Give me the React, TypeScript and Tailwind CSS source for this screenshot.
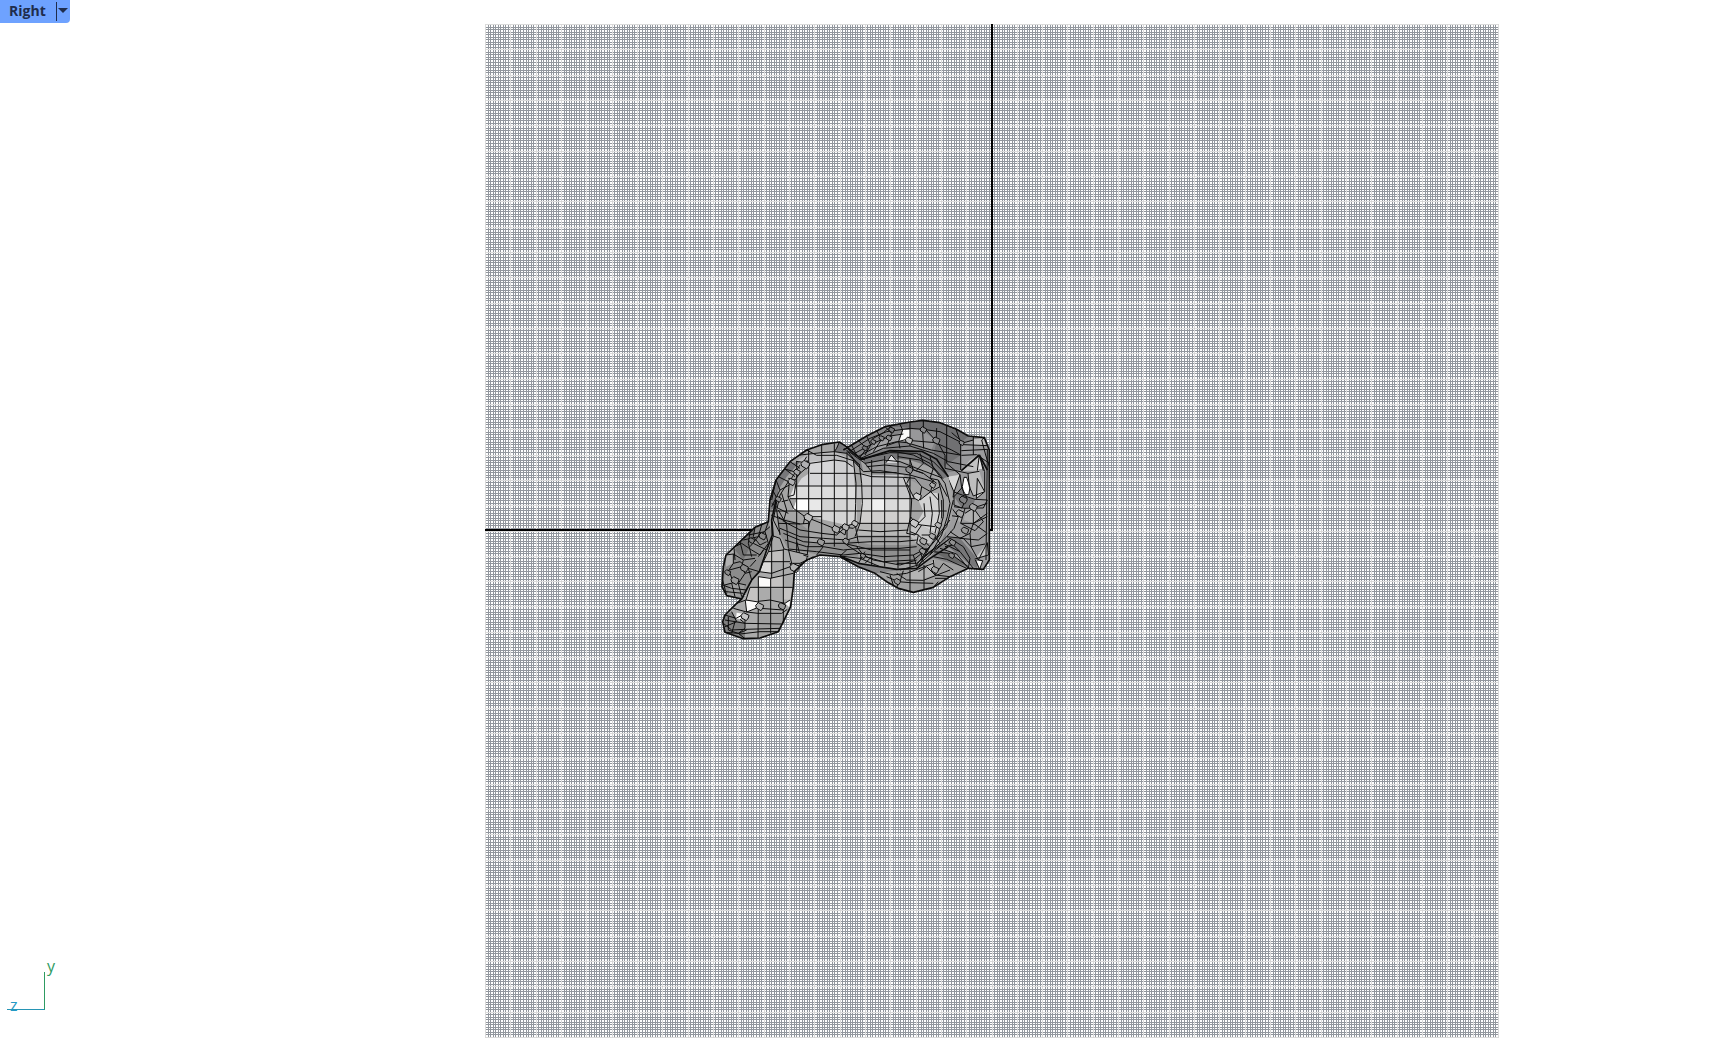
const GRID_SIZE = 1014;
const MINOR_STEPS = 400;
const SPACING = 1013 / MINOR_STEPS;

function gridPath(every: number) {
  let d = "";
  for (let i = 0; i <= MINOR_STEPS; i += every) {
    const p = Math.round(i * SPACING);
    d += `M${p} 0h1v${GRID_SIZE}h-1zM0 ${p}h${GRID_SIZE}v1h-${GRID_SIZE}z`;
  }
  return d;
}

const MINOR = gridPath(1);
const MAJOR = gridPath(10);

type Face = [string, string];

// Shaded regions of the mesh, back to front.
const BACK_FACES: Face[] = [
  ["#848486", "M430 150 500 108 555 80 630 66 668 61 720 68 770 88 805 108 853 113 868 150 868 480 850 508 805 505 750 530 700 562 640 577 595 565 560 545 525 520 475 500 420 470 440 300Z"],
  ["#6e6e70", "M555 80 630 66 668 61 720 68 770 88 805 108 790 122 740 100 668 88 600 80Z"],
  ["#707072", "M710 84 755 98 782 128 782 166 730 200 700 162 710 126Z"],
  ["#98989a", "M630 88 668 92 706 120 694 150 630 130Z"],
  ["#a2a2a4", "M520 135 600 100 597 124 510 160Z"],
  ["#fafafa", "M608 90 630 90 630 107 618 122 596 124Z"],
  ["#a0a0a0", "M525 520 620 508 700 475 805 505 750 530 700 562 640 577 595 565 560 545Z"],
  ["#b4b4b4", "M630 515 672 508 672 541 630 541ZM672 500 705 480 705 525 672 535Z"],
  ["#9c9c9e", "M784 128 853 113 868 150 868 480 850 508 805 505 740 455 730 220 784 210Z"],
  ["#c2c2c2", "M820 118 851 115 857 137 820 135ZM784 212 810 180 838 165 838 212Z"],
  ["#d8d8d8", "M742 230 780 224 762 276ZM832 235 854 275 829 296Z"],
  ["#bdbdbd", "M804 220 838 214 855 270 820 288 808 260Z"],
  ["#777779", "M762 290 785 264 800 290 825 298 818 324 786 324ZM740 410 780 415 835 480 830 505 805 490 745 440Z"],
  ["#b0b0b0", "M795 340 820 328 845 350 820 370 792 360ZM762 350 790 345 782 370Z"],
  ["#c8c8c8", "M862 428 865 465 824 477Z"],
  ["#f2f2f2", "M830 482 848 484 839 506Z"],
  ["#ffffff", "M790 234 802 234 811 262 806 284 792 284 787 260Z"],
  ["#e2e2e2", "M835 178 844 180 846 207 832 207Z"],
  ["#686868", "M700 455 750 460 805 500 750 482Z"],
];
const BODY_FACES: Face[] = [
  ["#a5a5a5", "M435 137 485 178 570 152 665 154 710 178 745 230 760 300 755 360 725 420 690 475 650 505 590 508 525 498 475 490 420 468 360 465 320 480 283 515 220 470 205 365 210 300 228 240 270 185 320 150 365 134 418 126Z"],
  ["#777779", "M485 178 570 152 665 154 710 178 745 230 730 235 690 200 630 180 570 175 500 195Z"],
  ["#99999b", "M495 190 570 178 630 190 700 230 690 270 620 235 515 218Z"],
  ["#bdbdbf", "M288 184 330 160 403 155 460 180 465 220 330 220 310 195Z"],
  ["#d6d6d8", "M330 185 403 180 403 258 290 258 305 235 328 220Z"],
  ["#cfcfd1", "M403 180 435 184 460 205 464 258 403 258Z"],
  ["#c7c7c9", "M485 220 515 225 610 225 630 258 485 258Z"],
  ["#dddddd", "M290 258 465 258 465 296 270 296Z"],
  ["#e8e8e8", "M290 298 365 298 365 334 280 330Z"],
  ["#d4d4d4", "M365 296 470 296 470 370 440 375 330 350 325 334 365 334Z"],
  ["#c5c5c7", "M470 258 632 258 638 296 470 296Z"],
  ["#dadada", "M483 296 632 296 632 334 483 334Z"],
  ["#f0f0f0", "M515 296 554 296 554 334 515 334Z"],
  ["#d0cfce", "M480 334 632 334 632 370 480 370Z"],
  ["#b9b9b8", "M475 370 635 370 627 405 475 405Z"],
  ["#fff", "M290 300 326 300 326 334 280 328Z"],
  ["#e6e6e6", "M282 260 290 296 270 290Z"],
  ["#d2d2d2", "M655 300 692 278 715 280 725 340 710 400 650 370 670 335Z"],
  ["#c3c3c3", "M640 370 670 378 705 400 690 430 650 430 625 402Z"],
  ["#8f8f8f", "M235 350 300 370 325 390 325 430 370 430 470 420 475 470 420 468 360 465 265 447 240 405ZM475 425 515 435 630 435 690 430 650 490 590 490 515 470 475 460Z"],
  ["#77777a", "M235 230 270 190 300 185 260 230 235 270 230 320 212 330 215 280ZM418 126 435 137 480 175 490 215 465 190 440 160 403 155Z"],
  ["#e5e5e7", "M558 188 574 165 594 188Z"],
];
const EAR_FACES: Face[] = [
  ["#8c8c8c", "M205 365 165 382 120 425 78 465 70 500 66 560 80 587 125 597 155 540 180 510 200 450 217 405Z"],
  ["#b2b2b2", "M78 465 102 445 100 490 78 500Z"],
  ["#9f9f9f", "M75 515 90 520 100 548 70 556ZM95 550 135 552 125 590 80 587Z"],
  ["#747474", "M120 425 165 382 150 440 130 480 105 450Z"],
  ["#ababab", "M220 408 240 415 252 447 325 465 283 515 280 560 272 620 250 665 235 695 180 714 130 716 75 697 68 665 75 645 110 610 135 590 150 540 178 515 190 465Z"],
  ["#c1bfbe", "M205 455 215 450 248 450 250 485 190 485Z"],
  ["#dcdbda", "M188 487 212 487 212 520 178 515Z"],
  ["#fbfaf9", "M175 530 210 533 210 560 178 560ZM136 602 172 604 170 624 140 636ZM110 638 133 642 120 658 108 655ZM255 610 270 602 268 622Z"],
  ["#c5c3c2", "M210 534 250 528 250 565 210 565ZM150 562 175 562 175 606 138 600ZM252 563 278 563 270 600 250 598Z"],
  ["#808080", "M68 665 75 645 95 635 110 660 135 670 135 716 75 697Z"],
  ["#a0a0a0", "M174 640 245 640 250 665 235 695 180 714 174 680Z"],
];

// Mesh edges.
const BACK_EDGES = `
M440 160 510 115 560 95 630 85 670 88 720 95 785 128M455 165 520 130 570 108 610 102M470 172 530 140 590 125 620 128 694 150 780 165
M480 176 550 145 630 138 700 160 745 185 820 200M630 66V138M670 61V82L668 98 671 145M600 73 608 90 596 124 600 145M555 80 575 100 560 140
M530 92 545 118 520 155M500 108 512 135 495 165M475 122 500 145 480 172M455 136 470 166M575 77 550 98 515 118M620 118 597 124 560 137
M635 122 706 128 755 150 784 166M678 90 704 118M715 130 735 166 735 205M710 84 709 113M740 78V190M755 98 784 123M782 128V210M792 128 820 120M790 134 865 137M820 110V165
M784 152 865 148M785 166 830 164 868 190M768 88 780 122M853 113 845 120 857 165 868 200M862 150 858 480M740 190 780 224 762 276 742 230M735 205 804 220 838 214
M784 212 838 165 854 215 854 275 832 235 829 296 854 275M804 220 808 260 820 288 854 275M838 165 832 212M838 165 850 212M780 224 785 264 800 290 825 298M792 232 800 232 810 262 806 284 792 284 787 260Z
M762 276 752 320 775 350 762 385 740 410M752 290 762 290 785 264M762 276 800 290 786 324 762 315ZM762 320 795 325 820 324 862 310M795 325 782 370 820 370 862 350M795 340 820 324 850 365 825 392 782 370
M825 298 862 300 850 324 820 324M820 324V375M862 340 820 370 858 397M820 370 810 400 780 415 750 395M780 415 835 420 862 400M775 350 740 345M810 400 813 440 835 480 862 428 865 465 824 477
M835 480 848 482 839 508 826 480M750 415 790 440 810 475 805 505M730 430 780 455 820 505M720 445 770 462 805 505M740 410 790 415 813 440 855 432M735 440 760 435 780 455
M700 455 750 460 805 500M700 470 740 478 800 505M700 480 705 525 750 530M705 525 680 500 655 515M590 520 620 540 670 541 750 510M560 530 595 545 630 548 700 550
M540 515 580 525 620 520 700 490M630 510V577M672 495V570M595 545 590 565M570 525 580 555M705 525 730 490 760 510M705 535 740 535M715 545 700 562M610 512 600 545`;

const BODY_EDGES = `
M365 134V425M403 130V440M326 150V435M441 155V420M515 180V495M554 168V500M594 160V505M630 175V505M290 184V465
M330 220H465L485 222 515 230 610 232 645 235M290 258H630M270 296H645M210 333H740M235 370 300 372 325 370M475 370H632
M300 165 365 158 403 155 440 160 480 195M288 184 330 190 403 180 435 184 458 200M320 150 350 166 410 166 460 182 490 215 540 212 630 225 700 245
M460 180 468 250 467 310 465 370 475 430M478 195 485 250 487 310 480 370 465 410M435 137 460 165 495 190 515 215M440 150 475 195M418 126 410 145 403 155M445 155 495 180
M495 190 550 180 600 185 650 205 690 220 730 235M500 200 554 195 620 202 670 220 710 250M515 218 590 218M558 188 574 165 594 188M480 178 570 158 650 160 700 185 745 230
M570 152 640 165 690 190 725 230M594 170 660 180 705 210 735 250M630 180 640 210 670 220M660 160 670 190 650 210M690 170 700 205 690 235 715 240 742 290
M630 232 620 250 640 290 655 290M610 232 635 300M645 235 665 260 660 290M665 260 692 275 720 260M692 275 660 300M692 275 715 300M692 275 700 240M672 310 675 350 655 370
M635 300 632 350 645 370M690 290 697 340 690 400M715 280 718 340 705 400M715 240 730 300 730 350 710 420M735 250 750 310 742 350 725 405 690 465M760 300 740 380 690 440 655 500
M750 360 710 410 650 495M725 300V355M632 370 665 375 705 380M630 395 655 405 690 440M655 405 650 430 685 455
M632 350 620 400 645 405 665 375M665 405 700 405 720 430 660 480
M300 195 268 245 264 290 280 325 315 350 370 372 410 388 440 378 465 370M308 190 320 170M300 220 330 195 320 180M300 220 285 240 265 235M288 250 282 285 264 290M240 270 268 255M258 208 300 220M270 185 300 205M255 207 285 230
M235 230 265 245 240 285 230 330 240 405M228 240 240 270 215 320M218 270 233 300M230 305 220 360 240 400M215 310 235 325 265 340M245 305 265 300M245 280 260 330 250 365M235 330 260 375 265 445M213 345 250 360 300 372
M235 350 262 370 300 390 365 400 410 405M240 385 300 410 370 415 440 420 475 410 515 410 630 410M250 400 310 425 370 430 430 430 515 425 600 425 650 420
M255 420 320 440 370 440 430 450 480 445 600 445 650 440M265 447 350 455 430 465 480 460 550 470 640 465 680 445M310 372 315 350M335 350H365M330 365 325 385
M475 370 460 385 420 380M475 390 540 395 625 390M410 405 440 378 435 405 410 388M430 430 475 440 515 450 630 450M440 435 495 470 550 485 640 480 690 440
M480 460 520 480 600 495 650 480M420 468 480 475 540 500M470 440 490 465 475 490M495 455 480 475M515 470 495 490M440 450 420 468M370 440 350 465M325 435 320 480M290 425 300 465
M640 465 650 500M660 450 670 485M590 490 650 490 700 450 745 420M660 480 720 430 740 410M600 510 655 495 700 455 750 415`;

const EAR_EDGES = `
M205 365 195 395 205 430 180 465M185 375 175 410 150 440M165 382 160 410 180 435 200 425M150 395 145 430 155 470M120 425 130 465 170 465M105 440 125 430 155 450 180 465M130 420 175 410 210 380M145 405 195 395
M78 465 100 462 130 480 165 475M100 462V490L80 520M102 445 105 480M100 490 120 485 145 505 178 515M75 515 90 520 100 548 70 556M88 510 125 500 135 520 115 550 100 548M135 520 155 515
M115 550 138 555M95 550 105 590M115 550 125 590M70 556 95 565 140 570M68 540 80 587M78 575 130 580M130 480 125 500M145 505 155 540M160 430 200 450M175 470 190 450M168 480 150 500
M217 365 220 408 205 455 190 485 178 515M220 408 240 415 252 447M190 485H270M215 415V535M250 447V670M205 455 250 450M178 515 215 520 285 495M175 530 210 535 280 520M212 535V700M175 530V606L174 715M150 562H278M150 562 138 600 175 606
M283 515 270 490 300 490 320 480M265 447 275 490M252 447 325 465M275 495 283 515M290 500 340 470M310 465 325 470M228 240 215 300M138 600 110 610M175 604 210 600 255 610 270 600M170 624 140 636 100 625M180 625 250 630
M136 602 140 636 174 640 245 640M75 645 108 655 133 642M95 635 110 665 75 680M75 660 105 665 135 670 245 672M70 670 95 690 135 688 240 685M85 650V690L120 702 180 695 235 695M105 665 95 700M135 650V685L115 700M120 658 135 670M75 697 115 700 135 716M115 700 140 690M245 640 262 628`;

const OUTLINES = `
M430 150 500 108 555 80 630 66 668 61 720 68 770 88 805 108 853 113 868 150 868 480 850 508 805 505 750 530 700 562 640 577 595 565 560 545 525 520 475 500 420 470 360 465 320 480 283 515 280 560 272 620 250 665 235 695 180 714 130 716 75 697 68 665 75 645 110 610 125 597 80 587 66 560 70 500 78 465 120 425 165 382 205 365 210 300 228 240 270 185 320 150 365 134 418 126 435 137 485 178 570 152 665 154 710 178 745 230
M125 597 155 540 178 515 200 450 217 405 215 360 228 300M420 468 475 490 525 498 590 508 650 505 690 475 745 440M838 165 784 212M838 165 862 210`;

// Five and six sided cells scattered between the regular quads: x, y, radius, shade.
const CELLS: [number, number, number, string][] = [
  [627, 122, 11, "#bbb"], [670, 90, 10, "#8a8a8c"], [709, 122, 11, "#8a8a8c"], [785, 129, 8, "#909092"], [567, 114, 9, "#8a8a8c"], [545, 115, 8, "#8a8a8c"], [520, 126, 8, "#8a8a8c"], [495, 145, 8, "#77777a"], [575, 90, 9, "#77777a"],
  [628, 210, 11, "#8c8c8e"], [652, 290, 12, "#cfcfcf"], [643, 370, 13, "#c8c8c8"], [670, 424, 11, "#a9a9a9"], [715, 376, 10, "#b5b5b5"], [325, 353, 13, "#bdbdbd"], [363, 427, 11, "#9a9a9a"], [408, 388, 12, "#b0b0b0"], [437, 382, 11, "#b5b5b5"], [438, 424, 10, "#999"],
  [316, 194, 13, "#b0b0b2"], [291, 217, 10, "#a5a5a7"], [275, 246, 11, "#b0b0b2"], [235, 298, 9, "#8c8c8e"], [465, 371, 10, "#c0c0c0"], [698, 256, 9, "#b0b0b0"], [668, 454, 10, "#999"], [697, 409, 10, "#a9a9a9"],
  [284, 504, 14, "#b5b5b5"], [179, 620, 12, "#b5b5b5"], [246, 619, 11, "#999"], [135, 650, 12, "#c5c5c5"], [133, 505, 12, "#8c8c8c"], [105, 542, 12, "#999"], [83, 518, 9, "#8c8c8c"], [188, 409, 11, "#8c8c8c"], [155, 422, 9, "#808080"],
  [705, 510, 11, "#a9a9a9"], [592, 545, 10, "#999"], [755, 467, 9, "#8c8c8c"], [780, 341, 12, "#a5a5a5"], [820, 322, 12, "#a5a5a5"], [790, 300, 12, "#808082"], [758, 428, 10, "#909090"], [795, 392, 11, "#999"], [489, 468, 8, "#909090"],
];

function cellPath(x: number, y: number, r: number) {
  const h = Math.round(r / 3);
  return `M${x - r} ${y - h}L${x - h} ${y - r}L${x + r} ${y - h}L${x + r - 2} ${y + h}L${x + h} ${y + r}L${x - r + 2} ${y + h}Z`;
}

function Faces({ faces }: { faces: Face[] }) {
  return (
    <g stroke="none">
      {faces.map(([fill, d]) => (
        <path key={d} d={d} fill={fill} />
      ))}
    </g>
  );
}

function BunnyMesh() {
  return (
    <svg x="215" y="376" width="310" height="260" viewBox="0 0 930 780">
      <g fill="none" stroke="#0c0c0c" strokeWidth="3" strokeLinejoin="round">
        <Faces faces={BACK_FACES} />
        <path d={BACK_EDGES} />
        <Faces faces={BODY_FACES} />
        <path d={BODY_EDGES} />
        <Faces faces={EAR_FACES} />
        <path d={EAR_EDGES} />
        {CELLS.map(([x, y, r, fill]) => (
          <path key={`${x}-${y}`} d={cellPath(x, y, r)} fill={fill} />
        ))}
        <path d={OUTLINES} strokeWidth="5" />
      </g>
    </svg>
  );
}

function ConstructionPlane() {
  return (
    <svg role="img" aria-label="Mesh model on construction plane" viewBox="0 0 1014 1014" className="block w-[1014px] shrink-0">
      <g shapeRendering="crispEdges">
        <path d={MINOR} fill="#92979e" />
        <path d={MAJOR} fill="#dadada" />
        <path d="M506 0h2v507h-2zM0 505h508v2H0z" fill="#000" />
      </g>
      <BunnyMesh />
    </svg>
  );
}

function AxisIcon() {
  return (
    <div role="img" aria-label="Axes" className="grid w-[54px] grid-cols-[38px_16px] pl-[7px] text-base leading-4">
      <span className="relative h-[38px] border-r border-b border-r-[#2e9b62] border-b-[#2795b5]">
        <span className="absolute -bottom-1 left-[3px] text-[#2599c4]">z</span>
      </span>
      <span className="-mt-3.5 pl-[2px] text-[#2e9b62]">y</span>
    </div>
  );
}

export default function App() {
  return (
    <main className="flex min-h-screen flex-col overflow-hidden bg-white font-['Open_Sans',sans-serif]">
      <header className="flex h-6 items-start">
        <div className="flex h-[23px] rounded-br bg-[#6ea2ff] text-[#1f2d4d]">
          <button type="button" className="flex w-14 items-start pl-[9px] text-sm leading-[22px] font-bold">Right</button>
          <button type="button" aria-label="Viewport menu" className="my-0.5 flex w-3.5 items-center justify-center border-l border-[#1f2d4d] pr-0.5 pb-0.5">
            <svg viewBox="0 0 10 5" className="h-[5px] w-[10px]" fill="currentColor">
              <path d="M0 0h10L5 5z" />
            </svg>
          </button>
        </div>
      </header>
      <section className="flex">
        <div className="flex flex-[485] items-end pb-7">
          <AxisIcon />
        </div>
        <ConstructionPlane />
        <div className="flex-[212]" />
      </section>
    </main>
  );
}
